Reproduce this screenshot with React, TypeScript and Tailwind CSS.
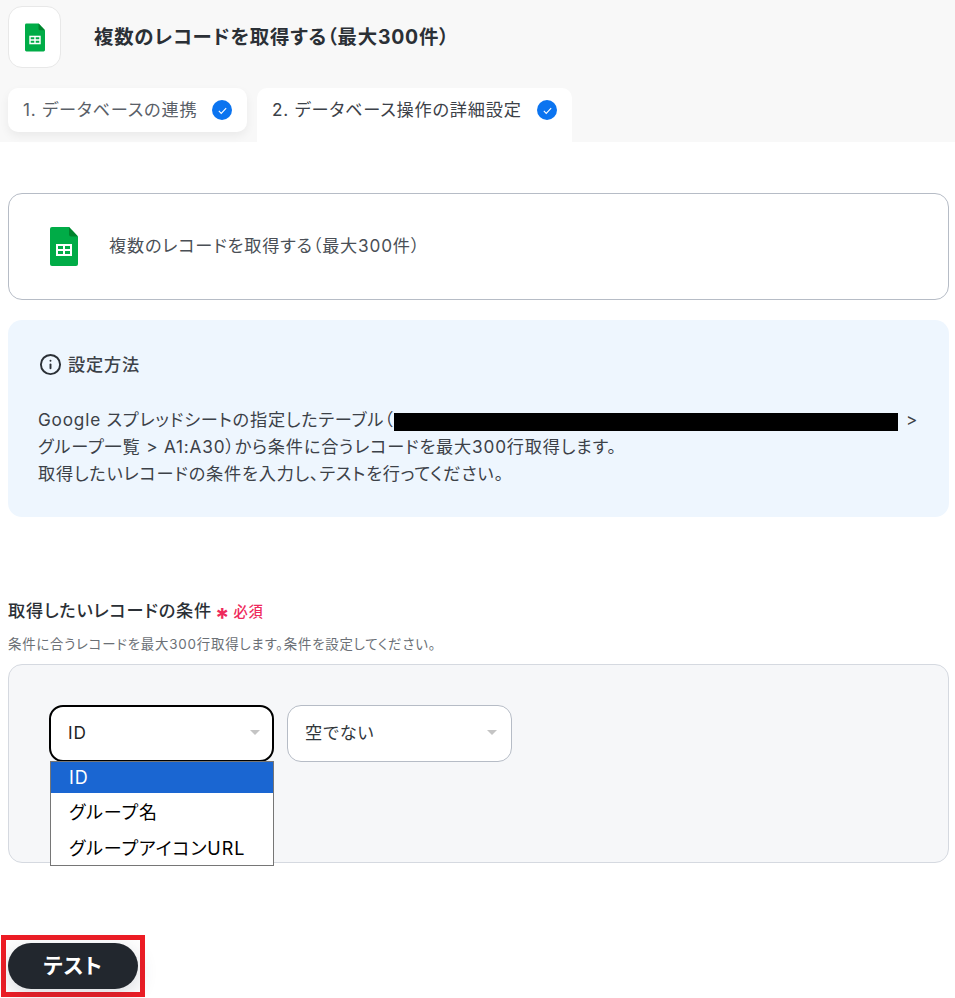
import React from 'react';
import { Info } from 'lucide-react';

const SheetsIcon: React.FC<{ className?: string }> = ({ className }) => (
  <svg viewBox="0 0 28 39" className={className}>
    <path d="M2 0h17l9 9.5V37a2 2 0 0 1-2 2H2a2 2 0 0 1-2-2V2a2 2 0 0 1 2-2z" fill="#00ac47" />
    <path d="M19 0l9 9.5h-7a2 2 0 0 1-2-2z" fill="#00832d" />
    <path d="M6 17h16v12H6z" fill="#fff" />
    <path d="M8 19h5v3H8zM15 19h5v3h-5zM8 24h5v3H8zM15 24h5v3h-5z" fill="#00ac47" />
  </svg>
);

const Check: React.FC = () => (
  <span className="flex h-[20px] w-[20px] items-center justify-center rounded-full bg-[#0b74f0]">
    <svg viewBox="0 0 12 12" className="h-[11px] w-[11px]" fill="none" stroke="#fff" strokeWidth="1.2">
      <path d="M2 6.5l2.6 2.6L10 3.4" />
    </svg>
  </span>
);

const Caret: React.FC = () => <span className="h-0 w-0 border-x-[5.5px] border-t-[5px] border-x-transparent border-t-[#c4c4c4]" />;

export default function App() {
  return (
    <div className="h-[998px] overflow-hidden bg-white font-['Inter','Noto_Sans_CJK_JP',sans-serif] tracking-[0.05em] text-[#32373c] [font-feature-settings:'palt']">
      <header className="h-[142px] bg-[#f8f8f8] pl-[8px] pt-[6px]">
        <div className="flex items-center">
          <div className="flex h-[62px] w-[53px] items-center justify-center rounded-[14px] border border-[#e8e8e8] bg-white">
            <SheetsIcon className="h-[31px] w-[20px]" />
          </div>
          <h1 className="ml-[33px] pt-[2px] text-[19.4px] font-bold text-[#2b3036]">複数のレコードを取得する（最大300件）</h1>
        </div>
        <div className="mt-[20px] flex items-start gap-[10px]">
          <div className="flex h-[44px] w-[239px] items-center rounded-[10px] bg-white pl-[15px] text-[17.2px] text-[#5a6068] shadow-[0_4px_10px_rgba(0,0,0,0.06)]">
            <span className="w-[189px] whitespace-nowrap">1. データベースの連携</span>
            <Check />
          </div>
          <div className="flex h-[54px] w-[315px] items-start rounded-t-[10px] bg-white pl-[15px] pt-[12px] text-[17.2px] text-[#3c4148]">
            <span className="w-[265px] whitespace-nowrap leading-[20px]">2. データベース操作の詳細設定</span>
            <Check />
          </div>
        </div>
      </header>

      <main className="px-[8px] pt-[51px]">
        <section className="flex h-[107px] w-[941px] items-center rounded-[14px] border border-[#b6bcc6] pl-[41px]">
          <SheetsIcon className="h-[39px] w-[28px]" />
          <p className="ml-[31px] mb-[2px] text-[17.2px] text-[#4a4f56]">複数のレコードを取得する（最大300件）</p>
        </section>

        <section className="mt-[20px] h-[197px] w-[941px] rounded-[14px] bg-[#eef6fe] pl-[30px] pt-[33px] text-[#3c4148]">
          <div className="flex items-center gap-[6px]">
            <Info className="ml-[1px] h-[23px] w-[23px] text-[#2b3036]" strokeWidth={2} />
            <span className="text-[17.2px] font-medium leading-[22px]">設定方法</span>
          </div>
          <div className="relative mt-[30px] text-[17.2px] leading-[27px]">
            <p>
              Google スプレッドシートの指定したテーブル（
              <span className="absolute left-[356px] top-[7px] h-[18px] w-[504px] bg-black" />
              <span className="absolute left-[868px] top-0">&gt;</span>
            </p>
            <p>グループ一覧 &gt; A1:A30）から条件に合うレコードを最大300行取得します。</p>
            <p>取得したいレコードの条件を入力し、テストを行ってください。</p>
          </div>
        </section>

        <section className="mt-[81px] w-[941px]">
          <div className="flex h-[24px] items-center leading-[24px]">
            <span className="pt-[2px] text-[17.2px] font-medium text-[#2b3036]">取得したいレコードの条件</span>
            <span className="ml-[3px] h-[20px] pt-[8px] text-[26px] font-bold leading-[20px] text-[#ee2a5c]">*</span>
            <span className="ml-[3px] pt-[4px] text-[14.3px] font-medium text-[#ee2a5c]">必須</span>
          </div>
          <p className="mt-[13px] text-[13.4px] leading-[18px] text-[#6b7076]">条件に合うレコードを最大300行取得します。条件を設定してください。</p>
          <div className="relative mt-[11px] flex h-[199px] items-start gap-[13px] rounded-[14px] border border-[#d5d9e0] bg-[#f6f7f9] pl-[40px] pt-[40px]">
            <div className="relative w-[225px]">
              <div className="flex h-[57px] items-center justify-between rounded-[14px] border-2 border-black bg-white pb-[2px] pl-[17px] pr-[12px] text-[17.2px] text-[#222]">
                <span>ID</span>
                <Caret />
              </div>
              <ul className="absolute left-[1px] top-[56px] w-[224px] border border-[#767676] bg-white text-[18px] tracking-[0.05em] text-black">
                <li className="flex h-[31px] items-center bg-[#1a66d2] pl-[18px] text-white">ID</li>
                <li className="flex h-[37px] items-center pl-[18px] pt-[2px]">グループ名</li>
                <li className="flex h-[35px] items-center pl-[18px] pt-[2px]">グループアイコンURL</li>
              </ul>
            </div>
            <div className="flex h-[57px] w-[225px] items-center justify-between rounded-[14px] border border-[#b6bcc6] bg-white pb-[2px] pl-[17px] pr-[14px] text-[17.2px] text-[#32373c]">
              <span>空でない</span>
              <Caret />
            </div>
          </div>
        </section>

        <div className="relative mt-[80px]">
          <span className="absolute -left-[7px] -top-[8px] h-[62px] w-[144px] border-[5px] border-[#ed1c24]" />
          <button className="relative flex h-[46px] w-[130px] items-center justify-center rounded-full bg-[#22272e] text-[21px] font-bold text-white shadow-[0_6px_20px_rgba(60,70,90,0.2)]">
            テスト
          </button>
        </div>
      </main>
    </div>
  );
}
